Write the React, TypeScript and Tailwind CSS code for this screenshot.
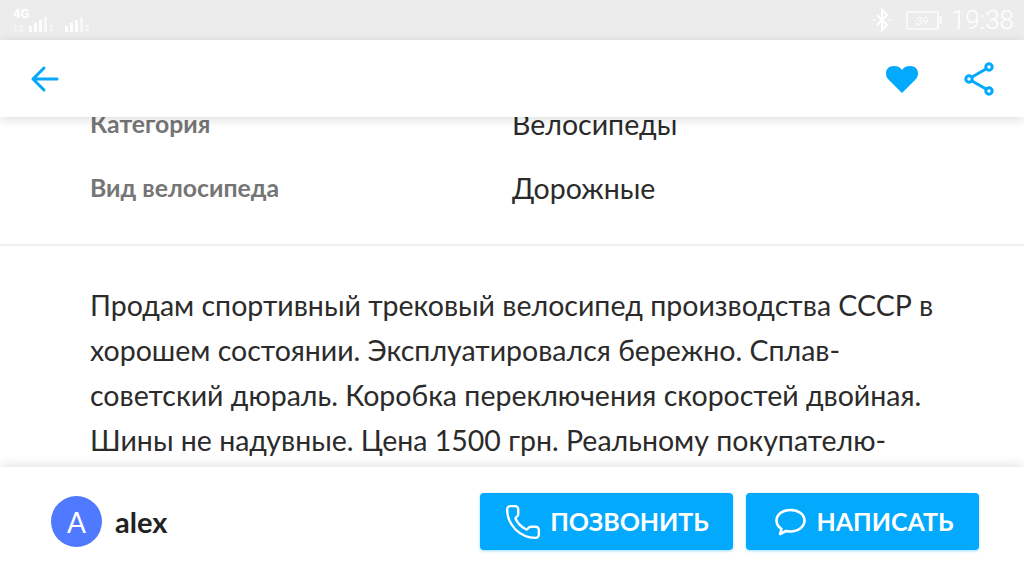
import React from "react";
import { Phone } from "lucide-react";

function Bars({ n }: { n: string }) {
  return (
    <div className="flex items-end gap-[2px]">
      {[6, 9, 12, 15].map((h) => (
        <svg key={h} width="3" height={h} className="block"><rect width="3" height={h} fill="#fff" opacity={h === 15 ? 0.6 : 0.9} /></svg>
      ))}
      <span className="text-[8px] leading-[8px] text-white">{n}</span>
    </div>
  );
}

export default function App() {
  return (
    <div className="w-[1024px] h-[576px] flex flex-col overflow-hidden bg-white font-['Lato','Noto_Sans',sans-serif]">
      <div className="h-[40px] shrink-0 bg-[#ececec] flex items-center pl-[13px] pr-[10px]">
        <div className="flex items-end gap-[2px] relative h-[22px] mt-[2px]">
          <span className="absolute left-0 -top-[3px] text-[13px] leading-[13px] font-bold text-white font-['Roboto',sans-serif]">4G</span>
          <span className="w-[14px] text-[8px] leading-[8px] text-white opacity-70">1↕</span>
          <Bars n="1" />
          <div className="w-[7px]" />
          <Bars n="2" />
        </div>
        <div className="ml-auto flex items-center">
          <svg width="20" height="24" viewBox="0 0 20 24" fill="none" stroke="#fff" strokeWidth="2" className="mr-[14px]">
            <path d="M5 7l10 10-5 5V2l5 5L5 17" />
            <circle cx="2" cy="12" r="1" fill="#fff" stroke="none" />
            <circle cx="18" cy="12" r="1" fill="#fff" stroke="none" />
          </svg>
          <div className="w-[33px] h-[19px] border-2 border-[#f8f8f8] rounded-[2px] flex items-center justify-center text-[11px] leading-none text-white">39</div>
          <div className="w-[3px] h-[8px] bg-[#f8f8f8] mr-[9px]" />
          <span className="text-[26px] leading-none text-white font-['Roboto',sans-serif] font-light">19:38</span>
        </div>
      </div>

      <div className="h-[77px] shrink-0 bg-white flex items-center pl-[30px] pr-[30px] relative z-10 shadow-[0_2px_10px_rgba(0,0,0,0.14)]">
        <svg width="30" height="30" viewBox="0 0 30 30" fill="none" stroke="#03a9fc" strokeWidth="3" strokeLinecap="round" strokeLinejoin="round">
          <path d="M3 16h24M14 5L3 16l11 11" transform="translate(0 -1)" />
        </svg>
        <svg width="34" height="30" viewBox="0 0 34 30" fill="#03a9fc" className="ml-auto mr-[45px]">
          <path d="M17 29 L3 15 C-1 10 1 2 9 2 C12.500 2 15.500 3.500 17 6 C18.500 3.500 21.500 2 25 2 C33 2 35 10 31 15 Z" />
        </svg>
        <svg width="30" height="34" viewBox="0 0 30 34" fill="none" stroke="#03a9fc" strokeWidth="3">
          <circle cx="5" cy="17" r="3.2" />
          <circle cx="25" cy="5" r="3.2" />
          <circle cx="25" cy="29" r="3.200" />
          <path d="M8 15L22 7M8 19L22 27" />
        </svg>
      </div>

      <div className="flex-1 min-h-0 overflow-hidden">
        <div className="-mt-[25px]">
          <div className="pl-[90px] border-b-2 border-[#f0f0f0] h-[154px]">
            <div className="flex h-[64px] items-center">
              <span className="w-[422px] text-[24.8px] font-bold text-[#757575]">Категория</span>
              <span className="text-[28.5px] text-[#2b2b2b]">Велосипеды</span>
            </div>
            <div className="flex h-[64px] items-center">
              <span className="w-[422px] text-[24.8px] font-bold text-[#757575]">Вид велосипеда</span>
              <span className="text-[28.5px] text-[#2b2b2b]">Дорожные</span>
            </div>
          </div>
          <p className="pl-[90px] pt-[37px] text-[28.5px] leading-[45px] text-[#2b2b2b] whitespace-nowrap">
            Продам спортивный трековый велосипед производства СССР в
            <br />
            хорошем состоянии. Эксплуатировался бережно. Сплав-
            <br />
            советский дюраль. Коробка переключения скоростей двойная.
            <br />
            Шины не надувные. Цена 1500 грн. Реальному покупателю-
          </p>
        </div>
      </div>

      <div className="h-[109px] shrink-0 bg-white relative z-10 shadow-[0_-2px_10px_rgba(0,0,0,0.12)] flex items-center pl-[51px] pr-[45px]">
        <div className="w-[51px] h-[51px] rounded-full bg-[#4f79fe] flex items-center justify-center text-white text-[28px] leading-none">A</div>
        <span className="ml-[13px] text-[29px] font-bold text-[#222]">alex</span>
        <button className="ml-auto w-[253px] h-[57px] rounded-[4px] bg-[#03a9fc] shadow-[0_1px_3px_rgba(3,169,252,0.4)] flex items-center justify-center gap-[8px] text-white text-[25px] font-bold">
          <Phone size={38} strokeWidth={1.5} />
          ПОЗВОНИТЬ
        </button>
        <button className="ml-[13px] w-[233px] h-[57px] rounded-[4px] bg-[#03a9fc] shadow-[0_1px_3px_rgba(3,169,252,0.4)] flex items-center justify-center gap-[9px] pl-[3px] text-white text-[25px] font-bold">
          <svg width="33" height="28" viewBox="0 0 32 28" fill="none" stroke="#fff" strokeWidth="2.6" strokeLinejoin="round">
            <path d="M16 2C8 2 2 6.500 2 12.500c0 3.500 2 6.500 5 8.500l-1.500 5 6-3c1.500.4 3 .5 4.500.5 8 0 14-4.800 14-11S24 2 16 2z" />
          </svg>
          НАПИСАТЬ
        </button>
      </div>
    </div>
  );
}
